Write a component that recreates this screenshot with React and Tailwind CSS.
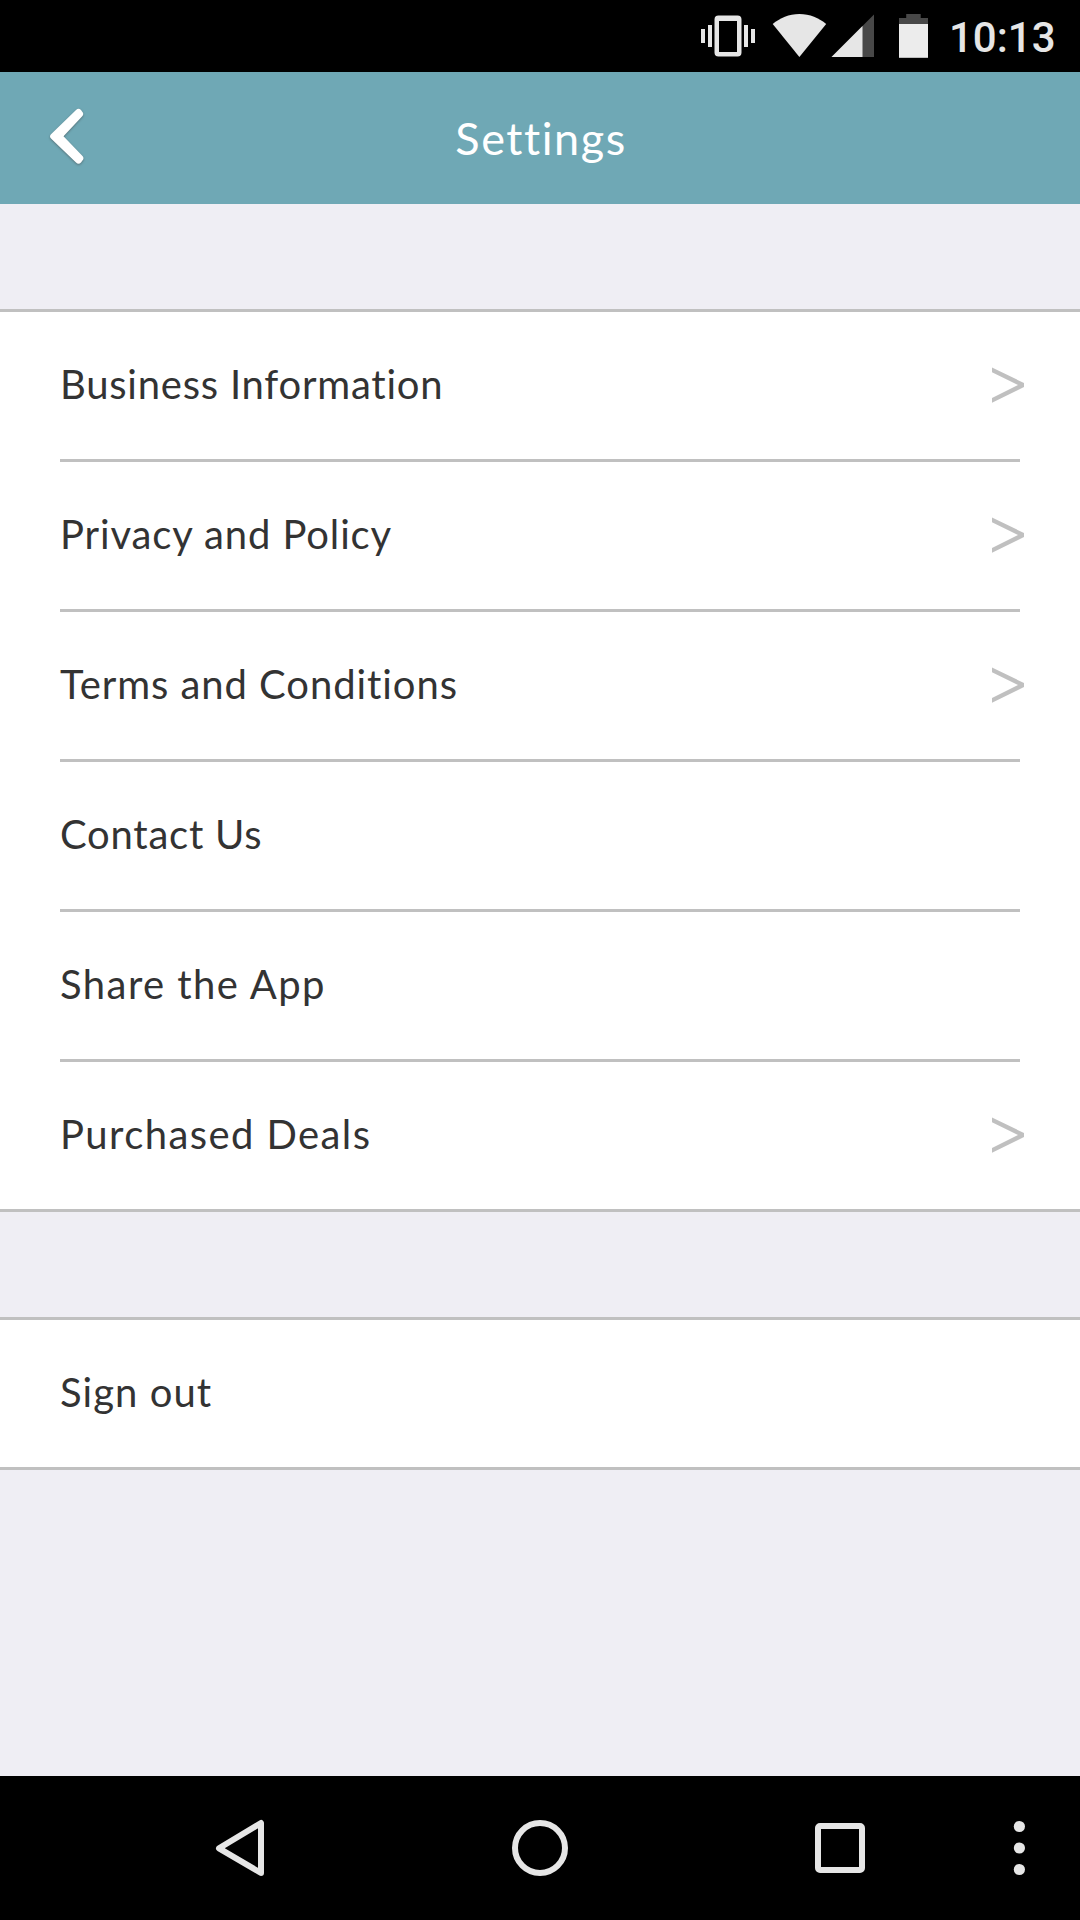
const primaryItems = [
  { label: "Business Information", tracking: "tracking-[0.77px]", chevron: true },
  { label: "Privacy and Policy", tracking: "tracking-[0.89px]", chevron: true },
  { label: "Terms and Conditions", tracking: "tracking-[0.93px]", chevron: true },
  { label: "Contact Us", tracking: "tracking-[0.77px]" },
  { label: "Share the App", tracking: "tracking-[1.44px]" },
  { label: "Purchased Deals", tracking: "tracking-[1.42px]", chevron: true },
];

function StatusBar() {
  return (
    <div className="flex h-[72px] w-full shrink-0 items-start justify-end bg-black pr-[22px]">
      <svg className="mr-4 h-[72px] w-14" viewBox="700 0 56 72" fill="#e6e6e6">
        <rect x="701" y="29" width="4" height="14" />
        <rect x="708" y="25" width="4" height="22" />
        <path fillRule="evenodd" d="M718.5 15.5h19a4 4 0 0 1 4 4v33a4 4 0 0 1-4 4h-19a4 4 0 0 1-4-4v-33a4 4 0 0 1 4-4zM719 21v31h18V21z" />
        <rect x="744" y="25" width="4" height="22" />
        <rect x="751" y="29" width="4" height="14" />
      </svg>
      <svg className="mr-1 h-[72px] w-[55px]" viewBox="772 0 55 72" fill="#e6e6e6">
        <path d="M799.4 57 772.7 24C780 18 789 14 799.4 14S819 18 826.2 24z" />
      </svg>
      <svg className="mr-[25px] h-[72px] w-[43px]" viewBox="831 0 43 72">
        <path d="M831.5 57 874 14.5V57z" fill="#484848" />
        <path d="M831.5 57 862.5 26V57z" fill="#e6e6e6" />
      </svg>
      <svg className="mr-[21px] h-[72px] w-[29px]" viewBox="899 0 29 72">
        <path d="M899 24v-6h7.2v-4h14.5v4h7.3v6z" fill="#484848" />
        <rect x="899" y="24" width="29" height="33.8" fill="#ececec" />
      </svg>
      <div className="flex h-[72px] w-[109px] items-center pt-[3px] font-['Roboto',sans-serif] text-[42px] leading-none font-medium text-[#e6e6e6]">
        10:13
      </div>
    </div>
  );
}

function Header() {
  return (
    <header className="grid h-[132px] shrink-0 grid-cols-[140px_1fr_140px] items-center bg-[#6fa8b5]">
      <button type="button" aria-label="Back" className="flex h-full items-center pl-11">
        <svg className="h-[66px] w-[46px] drop-shadow-[0_1px_1px_rgba(60,60,60,0.5)]" viewBox="44 105 46 66" fill="#fff">
          <path d="M76 110Q78.500 107.500 81 110L82.800 112.500Q84 114.500 82 116.500L63.500 136.300 82.500 156Q84.300 158 82.800 160L81 162.500Q78.500 165 76 162.500L51 138.500Q49 136.500 51 134.300z" />
        </svg>
      </button>
      <h1 className="pl-[2px] text-center text-[45px] leading-[54px] tracking-[1.55px] text-white">Settings</h1>
    </header>
  );
}

function Chevron() {
  return (
    <svg className="mb-[2px] -mr-1 h-9 w-8" viewBox="992 367 32 36" fill="#c0c0c0">
      <path d="M992 367.500 1024 383v4l-32 15.700V398l26-13-26-12.800z" />
    </svg>
  );
}

function Row({ label, tracking, chevron, last }) {
  return (
    <li className="px-[60px]">
      <div className={last ? "flex h-[147px] items-center justify-between" : "flex h-[150px] items-center justify-between border-b-[3px] border-[#c0c0c0]"}>
        <span className={`pb-[3px] text-[40px] leading-[48px] text-[#333] ${tracking}`}>{label}</span>
        {chevron && <Chevron />}
      </div>
    </li>
  );
}

function NavBar() {
  return (
    <nav className="flex h-36 shrink-0 items-center bg-black pl-[210px]">
      <svg className="mr-[240px] h-[60px] w-[60px]" viewBox="210 1818 60 60" fill="none" stroke="#e6e6e6" strokeWidth="6" strokeLinejoin="round">
        <path d="M261 1823v50l-42-24.700z" />
      </svg>
      <svg className="mr-[240px] h-[60px] w-[60px]" viewBox="510 1818 60 60" fill="none" stroke="#e6e6e6" strokeWidth="6">
        <circle cx="540" cy="1848" r="25" />
      </svg>
      <svg className="mr-[139px] h-[60px] w-[60px]" viewBox="810 1818 60 60" fill="#e6e6e6">
        <path fillRule="evenodd" d="M820 1823h40a5 5 0 0 1 5 5v40a5 5 0 0 1-5 5h-40a5 5 0 0 1-5-5v-40a5 5 0 0 1 5-5zM821 1829v38h38v-38z" />
      </svg>
      <svg className="h-[60px] w-5" viewBox="1009 1818 20 60" fill="#e6e6e6">
        <circle cx="1019.4" cy="1826.5" r="5.6" />
        <circle cx="1019.4" cy="1848" r="5.6" />
        <circle cx="1019.4" cy="1869.5" r="5.6" />
      </svg>
    </nav>
  );
}

export default function App() {
  return (
    <div className="flex h-[1920px] w-[1080px] flex-col overflow-hidden bg-[#efeef4] font-['Lato',sans-serif]">
      <StatusBar />
      <Header />
      <main className="flex-1 pt-[105px]">
        <ul className="border-y-[3px] border-[#c0c0c0] bg-white">
          {primaryItems.map((item, i) => (
            <Row key={item.label} {...item} last={i === primaryItems.length - 1} />
          ))}
        </ul>
        <ul className="mt-[105px] border-y-[3px] border-[#c0c0c0] bg-white">
          <Row label="Sign out" tracking="tracking-[1.04px]" last />
        </ul>
      </main>
      <NavBar />
    </div>
  );
}
